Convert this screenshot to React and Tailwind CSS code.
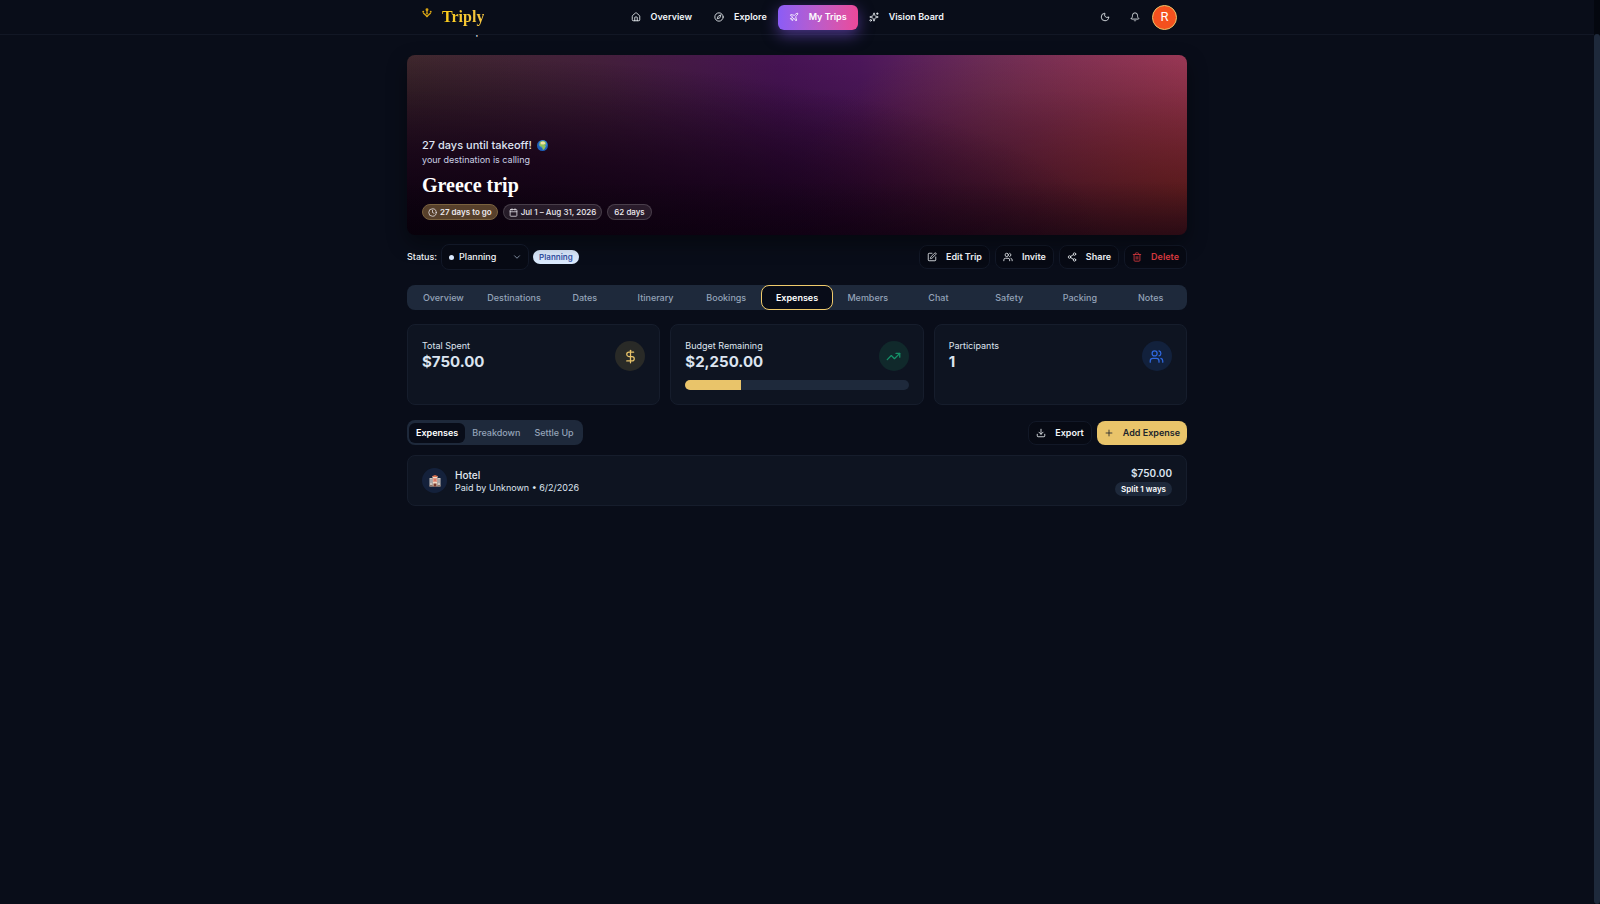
import React from "react";
import {
  House, Compass, Plane, Sparkles, Moon, Bell, Clock, Calendar, ChevronDown, SquarePen,
  Users, Share2, Trash2, DollarSign, TrendingUp, Download, Plus,
} from "lucide-react";

const NAV = [
  { label: "Overview", icon: House },
  { label: "Explore", icon: Compass },
  { label: "My Trips", icon: Plane, active: true },
  { label: "Vision Board", icon: Sparkles },
];

const TABS = ["Overview", "Destinations", "Dates", "Itinerary", "Bookings", "Expenses", "Members", "Chat", "Safety", "Packing", "Notes"];

const ACTIONS = [
  { label: "Edit Trip", icon: SquarePen },
  { label: "Invite", icon: Users },
  { label: "Share", icon: Share2 },
  { label: "Delete", icon: Trash2, danger: true },
];

function Logo() {
  return (
    <svg viewBox="0 0 24 24" className="mb-2 size-[10px]" fill="#d9a514" aria-hidden="true">
      <circle cx="12" cy="4" r="3.5" />
      <circle cx="3" cy="9" r="2.300" />
      <circle cx="21" cy="9" r="2.300" />
      <path d="M10.500 6h3v7h-3z" />
      <path d="M3 12l9 8 9-8" fill="none" stroke="#d9a514" strokeWidth="3" />
      <path d="M8.500 12.500h7L12 16z" />
      <path d="M9 19h6l-3 4z" />
    </svg>
  );
}

function Globe() {
  return (
    <svg viewBox="0 0 24 24" className="size-[11px]" role="img" aria-label="Globe">
      <circle cx="12" cy="12" r="12" fill="#1d5fb8" />
      <circle cx="13" cy="9" r="9" fill="#4b9be0" opacity="0.6" />
      <path d="M7 4c4-3 10-2 12 1l1 4-3 2 2 3-3 6-3 2-2-7-5-2-1-4z" fill="#8fbf5a" />
      <path d="M8 5c3-2 7-2 9 0l1 3-4 2-6-1z" fill="#f0e3a2" />
    </svg>
  );
}

function Hotel() {
  return (
    <svg viewBox="0 0 24 24" className="size-3" role="img" aria-label="Hotel">
      <path d="M1 6h6v17H1zM17 6h6v17h-6z" fill="#c9c3bd" />
      <path d="M7 2h10v21H7z" fill="#f0d9c4" />
      <path d="M7 2l5-2 5 2v2H7z" fill="#d9714f" />
      <path d="M9 6h2v3h2V6h2v8h-2v-3h-2v3H9z" fill="#d65a48" />
      <path d="M2.500 9h3v2h-3zM2.500 13h3v2h-3zM18.500 9h3v2h-3zM18.500 13h3v2h-3z" fill="#6d7684" />
      <path d="M9 17h6v6H9z" fill="#7a3b2e" />
      <path d="M1 20h6v3H1zM17 20h6v3h-6z" fill="#8d7568" />
    </svg>
  );
}

function Header() {
  return (
    <header className="sticky top-0 z-10 border-b border-[#121725] bg-[#090d19]">
      <div className="mx-auto flex h-[34px] max-w-[780px] items-center justify-between px-[10px]">
        <a href="#home" className="flex items-center gap-[10px] pl-[5px]">
          <Logo />
          <span className="bg-gradient-to-r from-[#facc15] to-[#f5c542] bg-clip-text font-['Liberation_Serif',serif] text-base leading-5 font-bold text-transparent">Triply</span>
        </a>
        <nav className="flex items-center">
          {NAV.map(({ label, icon: Icon, active }) => (
            <a
              key={label}
              href="#nav"
              className={
                "flex h-[25px] items-center gap-[10px] rounded-md px-[11px] font-semibold " +
                (active
                  ? "bg-gradient-to-r from-[#8b5cf6] to-[#ec4899] text-white shadow-[0_5px_15px_rgba(139,92,246,0.5)]"
                  : "text-[#f1f5f9]")
              }
            >
              <Icon className="size-[10px]" />
              {label}
            </a>
          ))}
        </nav>
        <div className="flex items-center justify-end">
          <button type="button" aria-label="Toggle theme" className="flex size-[30px] items-center justify-center text-[#f1f5f9]">
            <Moon className="size-[10px]" />
          </button>
          <button type="button" aria-label="Notifications" className="flex size-[30px] items-center justify-center text-[#f1f5f9]">
            <Bell className="size-[10px]" />
          </button>
          <button type="button" aria-label="Account" className="ml-[2px] flex size-[25px] items-center justify-center rounded-full border border-[#e9c46a] bg-[#f4511e] font-[Roboto,sans-serif] text-[13px] text-white">
            R
          </button>
        </div>
      </div>
    </header>
  );
}

function Hero() {
  return (
    <section className="relative flex h-[180px] flex-col justify-end overflow-hidden rounded-lg bg-[#2a0a3a] bg-[linear-gradient(to_top,rgba(4,0,6,0.35)_0%,transparent_30%),radial-gradient(ellipse_90%_100%_at_0%_100%,rgba(8,0,12,0.9)_0%,rgba(14,0,18,0.65)_45%,transparent_100%),linear-gradient(to_top,rgba(6,0,6,0.55)_0%,rgba(6,0,6,0.3)_50%,rgba(0,0,0,0.05)_100%),radial-gradient(ellipse_50%_110%_at_100%_75%,rgba(165,50,30,0.7)_0%,rgba(140,40,40,0.35)_50%,transparent_100%),linear-gradient(to_bottom,transparent_20%,rgba(60,0,60,0.6)_100%),linear-gradient(90deg,#432a30_0%,#48213f_25%,#4a1458_48%,#511860_58%,#703060_75%,#a84068_100%)] p-[15px] shadow-[0_8px_20px_rgba(0,0,0,0.4)]">
      <p className="flex items-center gap-[5px] text-[11px] leading-4 font-medium text-[#dfe3f2]">
        27 days until takeoff! <Globe />
      </p>
      <p className="leading-[14px] text-[#cbd0e4]">your destination is calling</p>
      <h1 className="mt-[6px] font-['Liberation_Serif',serif] text-xl leading-6 font-bold text-white">Greece trip</h1>
      <ul className="mt-[7px] flex gap-[5px] text-[8px] leading-3 font-medium text-[#eceaf0]">
        <li className="flex h-4 items-center gap-[3px] rounded-full border border-[#7a623f] bg-[#57402b] px-[5px] font-semibold">
          <Clock className="size-[9px]" />27 days to go
        </li>
        <li className="flex h-4 items-center gap-[3px] rounded-full border border-white/15 bg-white/10 px-[5px]">
          <Calendar className="size-[9px]" />Jul 1 – Aug 31, 2026
        </li>
        <li className="flex h-4 items-center rounded-full border border-white/15 bg-white/10 px-[6px]">62 days</li>
      </ul>
    </section>
  );
}

function StatusRow() {
  return (
    <div className="mt-[9px] flex items-center justify-between">
      <div className="flex items-center gap-1">
        <label htmlFor="status" className="font-medium text-[#f1f5f9]">Status:</label>
        <div className="relative flex items-center">
          <span className="pointer-events-none absolute left-2 size-[5px] rounded-full bg-[#dbeafe]" />
          <select id="status" className="h-[26px] w-[88px] appearance-none rounded-lg border border-[#121827] bg-[#070a14] pl-[17px] font-medium text-[#f1f5f9]">
            <option>Planning</option>
            <option>Booked</option>
          </select>
          <ChevronDown className="pointer-events-none absolute right-[7px] size-[10px] text-[#94a3b8]" />
        </div>
        <span className="rounded-full bg-[#dbeafe] px-[6px] py-px text-[8px] leading-3 font-semibold text-[#3451a3]">Planning</span>
      </div>
      <div className="flex gap-[5px]">
        {ACTIONS.map(({ label, icon: Icon, danger }) => (
          <button
            key={label}
            type="button"
            className={
              "flex h-6 items-center gap-[9px] rounded-lg border border-[#121827] bg-[#070a14] px-[7px] font-semibold " +
              (danger ? "text-[#dc3b40]" : "text-[#f1f5f9]")
            }
          >
            <Icon className="size-[10px]" />
            {label}
          </button>
        ))}
      </div>
    </div>
  );
}

function StatCard({ label, value, tone, icon: Icon, children }) {
  return (
    <article className="h-[81px] rounded-lg border border-[#161d2c] bg-[#0e1421] px-[14px] pt-[15px]">
      <div className="flex items-center justify-between">
        <div>
          <h2 className="leading-3 text-[#dfe5ef]">{label}</h2>
          <p className="text-[15px] leading-5 font-bold text-[#dbe4f0]">{value}</p>
        </div>
        <span className={"flex size-[30px] items-center justify-center rounded-full " + tone}>
          <Icon className="size-[15px]" />
        </span>
      </div>
      {children}
    </article>
  );
}

export default function App() {
  return (
    <div className="flex min-h-screen bg-[#090d19] font-[Inter,sans-serif] text-[9px] leading-3">
      <div className="min-w-0 flex-1">
        <Header />
        <main className="mx-auto -mt-[10px] max-w-[780px]">
          <a href="#trips" className="ml-[23px] block h-[30px] leading-[14px] font-medium text-[#f1f5f9]">Back to Trips</a>
          <Hero />
          <StatusRow />
          <nav className="mt-[15px] grid h-[25px] grid-cols-11 rounded-lg bg-[#1e293b] px-px">
            {TABS.map((t) => (
              <button
                key={t}
                type="button"
                className={
                  "rounded-lg font-medium " +
                  (t === "Expenses" ? "-mx-px border border-[#f0cb6c] bg-[#080c18] font-semibold text-white" : "text-[#94a3b8]")
                }
              >
                {t}
              </button>
            ))}
          </nav>

          <section className="mt-[14px] grid grid-cols-3 gap-[10px]">
            <StatCard label="Total Spent" value="$750.00" tone="bg-[#292a27] text-[#e9c46a]" icon={DollarSign} />
            <StatCard label="Budget Remaining" value="$2,250.00" tone="bg-[#10292b] text-[#159268]" icon={TrendingUp}>
              <div className="mt-2 h-[10px] overflow-hidden rounded-full bg-[#1e293b]">
                <div className="h-full w-1/4 bg-[#e9c46a]" />
              </div>
            </StatCard>
            <StatCard label="Participants" value="1" tone="bg-[#12213c] text-[#2f68e0]" icon={Users} />
          </section>

          <div className="mt-[15px] flex items-center justify-between">
            <div className="flex h-[25px] items-center rounded-lg bg-[#1e293b] px-[2px] font-medium text-[#94a3b8]">
              <button type="button" className="h-5 rounded-md bg-[#080c18] px-[7px] font-semibold text-white">Expenses</button>
              <button type="button" className="h-5 px-[7px]">Breakdown</button>
              <button type="button" className="h-5 px-[7px]">Settle Up</button>
            </div>
            <div className="flex gap-[5px] font-semibold">
              <button type="button" className="flex h-6 items-center gap-[9px] rounded-lg border border-[#121827] bg-[#070a14] px-[7px] text-[#f1f5f9]">
                <Download className="size-[10px]" />Export
              </button>
              <button type="button" className="flex h-6 items-center gap-[9px] rounded-lg bg-[#e9c46a] px-[7px] text-[#20242c]">
                <Plus className="size-[10px]" />Add Expense
              </button>
            </div>
          </div>

          <article className="mt-[10px] flex h-[51px] items-center justify-between rounded-lg border border-[#161d2c] bg-[#0e1421] px-[14px]">
            <div className="flex items-center gap-2">
              <span className="flex size-[25px] items-center justify-center rounded-full bg-[#14213b]">
                <Hotel />
              </span>
              <div>
                <h3 className="text-[10px] leading-[14px] font-medium text-[#e2e8f0]">Hotel</h3>
                <p className="leading-3 text-[#dfe5ef]">Paid by Unknown • 6/2/2026</p>
              </div>
            </div>
            <div className="flex flex-col items-end gap-[3px] pt-[2px]">
              <p className="text-[10px] leading-3 font-semibold text-[#dbe4f0]">$750.00</p>
              <span className="rounded-full bg-[#1e293b] px-[6px] py-px text-[8px] leading-3 font-semibold text-white">Split 1 ways</span>
            </div>
          </article>
        </main>
      </div>
      <div className="flex w-[6px] flex-col bg-[#04070f] pt-[34px]" aria-hidden="true">
        <div className="flex-1 rounded-full bg-[#1e293b]" />
      </div>
    </div>
  );
}
